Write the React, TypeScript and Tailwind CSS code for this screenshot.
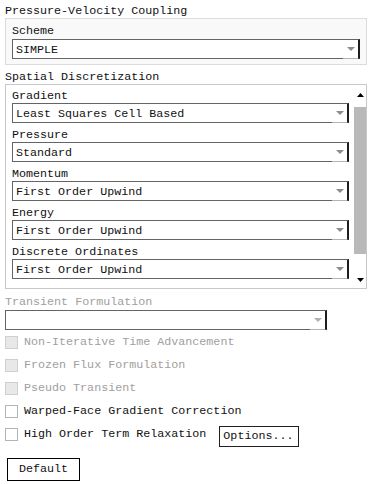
const FONT = "font-['Liberation_Mono',monospace] text-[11.7px]";

function Arrow({ color = '#8c8c8c' }: { color?: string }) {
  return (
    <svg width="8" height="4" viewBox="0 0 8 4">
      <polygon points="0,0 8,0 4,4" fill={color} />
    </svg>
  );
}

function Combo({ value, width, disabled }: { value: string; width: string; disabled?: boolean }) {
  return (
    <div className={`flex h-[20px] ${width} border border-[#646464] border-r-2 border-r-[#1e1e1e] bg-white`}>
      <div className="flex-1 pl-[3px] pt-[2px] leading-[16px] text-[#111] whitespace-nowrap overflow-hidden">{value}</div>
      <div className="w-[15px] flex items-center justify-center border-b border-[#b4b4b4] mb-[-1px]">
        <Arrow color={disabled ? '#b0b0b0' : '#8c8c8c'} />
      </div>
    </div>
  );
}

function Check({ label, disabled, children }: { label: string; disabled?: boolean; children?: React.ReactNode }) {
  return (
    <div className="flex items-center h-[23px]">
      <div
        className={`w-[13px] h-[13px] border ${disabled ? 'border-[#cfcfcf] bg-[#e8e8e8]' : 'border-[#b4b4b4] bg-white'}`}
      />
      <span className={`ml-[6px] whitespace-nowrap ${disabled ? 'text-[#a0a0a0]' : 'text-[#111]'}`}>{label}</span>
      {children}
    </div>
  );
}

const SPATIAL = [
  { label: 'Gradient', value: 'Least Squares Cell Based' },
  { label: 'Pressure', value: 'Standard' },
  { label: 'Momentum', value: 'First Order Upwind' },
  { label: 'Energy', value: 'First Order Upwind' },
  { label: 'Discrete Ordinates', value: 'First Order Upwind' },
];

export default function App() {
  return (
    <div className={`w-[371px] h-[484px] bg-white pl-[5px] text-[#111] ${FONT}`}>
      <div className="h-[18px] pt-[4px] leading-[14px]">Pressure-Velocity Coupling</div>

      {/* Coupling group */}
      <div className="w-[362px] h-[47px] border border-[#dcdcdc] bg-[#f9f9f9] px-[6px]">
        <div className="h-[20px] pt-[5px] leading-[14px]">Scheme</div>
        <Combo value="SIMPLE" width="w-[348px]" />
      </div>

      <div className="h-[19px] pt-[5px] leading-[14px]">Spatial Discretization</div>

      {/* Scrollable list */}
      <div className="flex w-[362px] h-[205px] border border-[#c8c8c8] bg-white">
        <div className="flex-1 pl-[6px]">
          {SPATIAL.map((s, i) => (
            <div key={s.label}>
              <div className={`${i === 0 ? 'h-[18px] pt-[4px]' : 'h-[19px] pt-[5px]'} leading-[14px]`}>{s.label}</div>
              <Combo value={s.value} width="w-[337px]" />
            </div>
          ))}
        </div>
        <div className="w-[14px] flex flex-col items-center pt-[8px] pb-[6px]">
          <svg width="7" height="4" viewBox="0 0 7 4" className="ml-[2px]">
            <polygon points="0,4 7,4 3.5,0" fill="#000" />
          </svg>
          <div className="w-[12px] ml-[2px] mt-[10px] h-[147px] bg-[#b9b9b9]" />
          <div className="flex-1" />
          <svg width="7" height="4" viewBox="0 0 7 4" className="ml-[2px]">
            <polygon points="0,0 7,0 3.5,4" fill="#000" />
          </svg>
        </div>
      </div>

      <div className="h-[21px] pt-[6px] leading-[14px] text-[#a0a0a0]">Transient Formulation</div>
      <Combo value="" width="w-[322px]" disabled />

      <div className="mt-[1px]">
        <Check label="Non-Iterative Time Advancement" disabled />
        <Check label="Frozen Flux Formulation" disabled />
        <Check label="Pseudo Transient" disabled />
        <Check label="Warped-Face Gradient Correction" />
        <Check label="High Order Term Relaxation">
          <button className="ml-[13px] mt-[4px] w-[80px] h-[21px] border border-[#202020] bg-white text-left pl-[3px] leading-[19px]">
            Options...
          </button>
        </Check>
      </div>

      <button className="ml-[2px] mt-[12px] w-[73px] h-[23px] border border-black bg-white leading-[21px]">
        Default
      </button>
    </div>
  );
}
